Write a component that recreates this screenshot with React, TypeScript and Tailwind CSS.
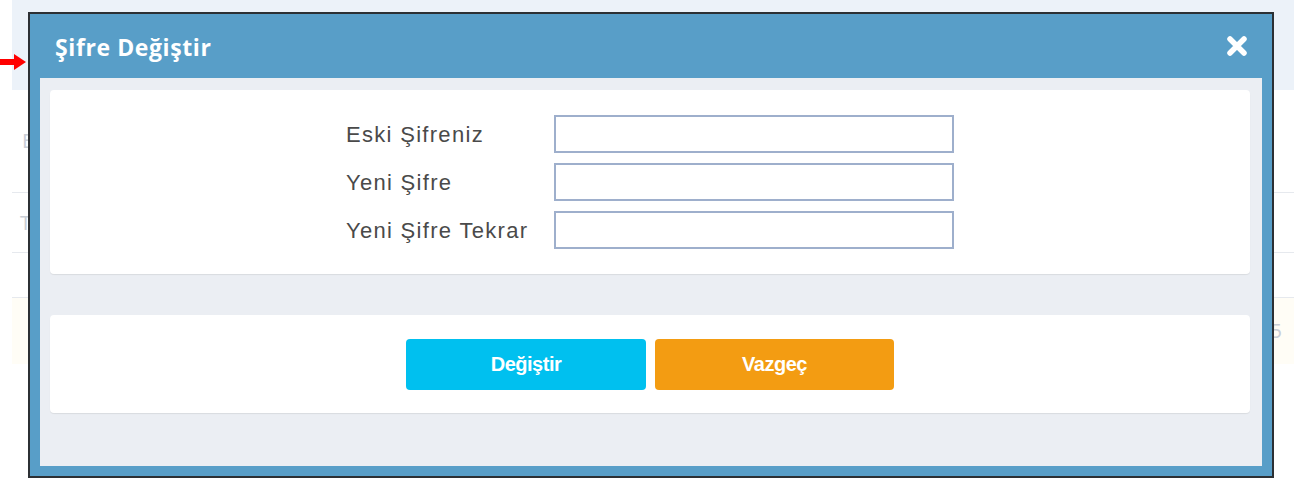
import React from 'react';

// faint page rows that sit behind the dialog
const PageBehind: React.FC = () => {
  return (
    <div className="min-h-[479px] w-full bg-white">
      <div className="ml-[12px] h-[90px] bg-[#ecf2f9]" />
      <div className="ml-[12px] flex h-[103px] items-center border-b border-[#e6e9ee] pl-[10px] text-[20px] text-[#c9ced6]">
        E
      </div>
      <div className="ml-[12px] flex h-[60px] items-center border-b border-[#e6e9ee] pl-[8px] text-[20px] text-[#c9ced6]">
        T
      </div>
      <div className="ml-[12px] h-[45px] border-b border-[#e6e9ee]" />
      <div className="ml-[12px] flex h-[66px] items-center justify-end bg-[#fffdf6] pr-[12px] text-[20px] text-[#c9ced6]">
        5
      </div>
    </div>
  );
};

const fields = ['Eski Şifreniz', 'Yeni Şifre', 'Yeni Şifre Tekrar'];

const PasswordDialog: React.FC = () => {
  return (
    <div className="absolute left-[28px] top-[12px] flex h-[466px] w-[1246px] flex-col border-2 border-[#2c3034] bg-[#589ec8]">
      <div className="flex h-[64px] items-center justify-between pl-[25px] pr-[22px]">
        <h2
          className="mt-[3px] text-[23px] font-bold tracking-[0.6px] text-white"
          style={{ fontFamily: '"Open Sans", sans-serif' }}
        >
          Şifre Değiştir
        </h2>
        <button className="flex h-[26px] w-[26px] items-center justify-center">
          <svg width="24" height="24" viewBox="0 0 24 24">
            <path d="M5 5 L19 19 M19 5 L5 19" stroke="white" strokeWidth="5.5" strokeLinecap="round" fill="none" />
          </svg>
        </button>
      </div>

      <div className="mx-[10px] mb-[10px] flex flex-1 flex-col bg-[#ebeef3] pl-[10px] pr-[12px] pt-[12px]">
        <div className="flex h-[184px] justify-center rounded-[4px] bg-white pt-[25px] shadow-[0_1px_1px_rgba(0,0,0,0.08)]">
          <div className="flex flex-col gap-[10px]">
            {fields.map((label) => (
              <div key={label} className="flex items-center">
                <label
                  className="w-[208px] text-[22px] tracking-[1.3px] text-[#4a4a4a]"
                  style={{ fontFamily: '"Liberation Sans", Arial, sans-serif' }}
                >
                  {label}
                </label>
                <input type="password" className="h-[38px] w-[400px] border-2 border-[#9eafcc] bg-white outline-none" />
              </div>
            ))}
          </div>
        </div>

        <div className="mt-[41px] flex h-[98px] items-center justify-center gap-[9px] rounded-[4px] bg-white shadow-[0_1px_1px_rgba(0,0,0,0.08)]">
          <button
            className="h-[51px] w-[240px] rounded-[4px] bg-[#00c0ef] text-[20px] font-bold tracking-[-0.5px] text-white"
            style={{ fontFamily: '"Liberation Sans", Arial, sans-serif' }}
          >
            Değiştir
          </button>
          <button
            className="h-[51px] w-[239px] rounded-[4px] bg-[#f39c12] text-[20px] font-bold tracking-[-0.5px] text-white"
            style={{ fontFamily: '"Liberation Sans", Arial, sans-serif' }}
          >
            Vazgeç
          </button>
        </div>
      </div>
    </div>
  );
};

export default function App() {
  return (
    <div className="relative h-[479px] w-[1294px] overflow-hidden">
      <PageBehind />
      {/* red pointer at the dialog's left edge */}
      <svg className="absolute left-0 top-[54px]" width="27" height="16" viewBox="0 0 27 16">
        <path d="M0 5 H14 V0 L26 8 L14 16 V11 H0 Z" fill="#ff0000" />
      </svg>
      <PasswordDialog />
    </div>
  );
}
